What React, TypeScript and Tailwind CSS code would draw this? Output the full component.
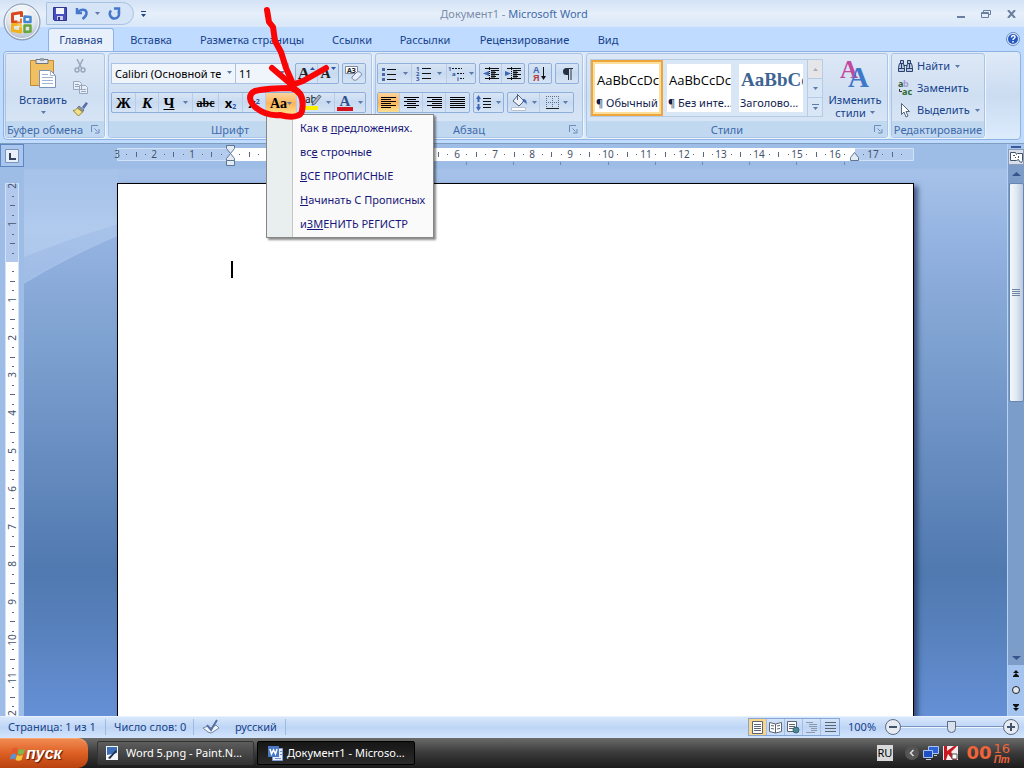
import React, { useState } from 'react';
import { clsx } from 'clsx';

const TABS = ['Главная', 'Вставка', 'Разметка страницы', 'Ссылки', 'Рассылки', 'Рецензирование', 'Вид'];
const TAB_WIDTHS = ['w-[66px]', 'w-[74px]', 'w-[128px]', 'w-[72px]', 'w-[74px]', 'w-[125px]', 'w-[42px]'];

const CASE_OPTIONS = [
  { before: 'Как в ', key: 'п', after: 'редложениях.' },
  { before: 'вс', key: 'е', after: ' строчные' },
  { before: '', key: 'В', after: 'СЕ ПРОПИСНЫЕ' },
  { before: '', key: 'Н', after: 'ачинать С Прописных' },
  { before: 'и', key: 'ЗМ', after: 'ЕНИТЬ РЕГИСТР' }
];

const UNIT = 37.8;

const Caret = ({ className }: { className?: string }) => (
  <svg width="5" height="3" viewBox="0 0 5 3" className={clsx('shrink-0', className)}>
    <path d="M0 0h5L2.5 3z" fill="#5a7bab" />
  </svg>
);

const Launcher = ({ label }: { label: string }) => (
  <button aria-label={label} className="absolute right-1 top-1">
    <svg width="9" height="9" viewBox="0 0 9 9" fill="none" stroke="#6b8cba">
      <path d="M.5 7V.5H7" />
      <path d="M3.5 3.5l3 3M8 4v4H4" />
    </svg>
  </button>
);

interface GroupProps {
  title: string;
  className: string;
  launcher?: boolean;
  children: React.ReactNode;
}

// Ribbon group: content on top, caption strip at the bottom
const Group = ({ title, className, launcher = true, children }: GroupProps) => (
  <section
    className={clsx(
      'flex shrink-0 flex-col rounded-[3px] border border-[#a9c4e6] bg-gradient-to-b from-[#dde8f6] via-[#cfdff2] to-[#dbe8f7] shadow-[1px_1px_0_#eef5fd]',
      className
    )}
  >
    <div className="flex-1">{children}</div>
    <div className="relative h-4 whitespace-nowrap rounded-b-[3px] bg-[#c1d8f1] text-center leading-[18px] text-[#3e6aaa]">
      <span className={launcher ? 'pr-5' : ''}>{title}</span>
      {launcher && <Launcher label={title} />}
    </div>
  </section>
);

const Cluster = ({ children, className }: { children: React.ReactNode; className?: string }) => (
  <div
    className={clsx(
      'flex h-[21px] divide-x divide-[#b7cce8] rounded-[2px] border border-[#8fb0da] bg-gradient-to-b from-[#d8e5f5] via-[#c8daf0] to-[#d6e4f5]',
      className
    )}
  >
    {children}
  </div>
);

interface ToolProps {
  label: string;
  width: string;
  active?: boolean;
  caret?: boolean;
  onClick?: () => void;
  children: React.ReactNode;
}

const Tool = ({ label, width, active, caret, onClick, children }: ToolProps) => (
  <button
    aria-label={label}
    onClick={onClick}
    className={clsx(
      'flex h-full shrink-0 items-center justify-center gap-1 text-black',
      width,
      active && 'bg-gradient-to-b from-[#fbd49b] via-[#fbb45a] to-[#fde08f]'
    )}
  >
    {children}
    {caret && <Caret />}
  </button>
);

const Lines = ({ rows }: { rows: [number, number][] }) => (
  <svg width="15" height="13" viewBox="0 0 15 13" stroke="#000">
    {rows.map(([x, w], i) => (
      <path key={i} d={`M${x} ${i * 2 + 1.5}h${w}`} />
    ))}
  </svg>
);

const OfficeLogo = () => (
  <svg width="38" height="38" viewBox="0 0 38 38">
    <defs>
      <radialGradient id="orb" cx="50%" cy="30%" r="70%">
        <stop offset="0" stopColor="#fff" />
        <stop offset=".6" stopColor="#dfe5ee" />
        <stop offset="1" stopColor="#a9b7ca" />
      </radialGradient>
    </defs>
    <circle cx="19" cy="19" r="18" fill="url(#orb)" stroke="#8595ae" />
    <circle cx="19" cy="19" r="16.5" fill="none" stroke="#f7fafe" />
    <g fill="none" strokeWidth="3" strokeLinejoin="round">
      <path d="M18.500 14V9.500l-9 1.500v8h5" stroke="#d9481c" />
      <path d="M21.500 13.500l6 .5v5h-6z" stroke="#4585cf" strokeWidth="2.500" />
      <path d="M14 21.500H9.500v6l8 1.500v-5" stroke="#f2b21c" />
      <path d="M21.500 22.500h6v6l-6 .5z" stroke="#69a63a" strokeWidth="2.500" />
      <path d="M18 15.500v4h-4.500" stroke="#e8762c" strokeWidth="2" />
      <path d="M14 22h4v3" stroke="#f4c64a" strokeWidth="2" />
    </g>
  </svg>
);

const FontSizeGlyph = ({ up }: { up?: boolean }) => (
  <span className="flex items-start">
    <span className={clsx("font-['Liberation_Serif',serif] font-bold leading-4 text-[#222]", up ? 'text-[17px]' : 'text-[14px]')}>A</span>
    <svg width="5" height="3" viewBox="0 0 5 3" className="mt-px">
      <path d={up ? 'M0 3h5L2.500 0z' : 'M0 0h5L2.500 3z'} fill="#2a55a5" />
    </svg>
  </span>
);

const HorizontalRuler = () => {
  const marks: React.ReactNode[] = [];
  for (let q = -12; q <= 71; q++) {
    const x = 113 + (q * UNIT) / 4;
    if (q === 0 || x > 794 || q === 66) continue;
    if (q % 4 === 0) {
      marks.push(
        <text key={q} x={Math.round(x)} y="10" textAnchor="middle" fontSize="10" fill="#44536d">
          {Math.abs(q / 4)}
        </text>
      );
    } else {
      const half = q % 2 === 0;
      marks.push(<path key={q} d={half ? `M${Math.round(x)}.5 4v5` : `M${Math.round(x)}.5 6v1`} stroke="#5a6680" />);
    }
  }
  return (
    <svg width="797" height="20" viewBox="0 0 797 20" className="shrink-0 overflow-visible">
      <path d="M.5.500h796v12H.5z" fill="#b4cdee" stroke="#cfe2f8" />
      <path d="M113 0h625v13H113z" fill="#fff" />
      {marks}
      {Array.from({ length: 13 }, (_, i) => (
        <path key={i} d={`M${Math.round(113 + (i + 1) * 47.2)}.5 14v3`} stroke="#7189ad" />
      ))}
      <g fill="#e3ebf5" stroke="#5f7594">
        <path d="M109.500-2.500h8v3l-4 5 4 5v2h-8v-2l4-5-4-5z" />
        <path d="M109.500 12.500h8v5h-8z" />
        <path d="M737.500 4.500l4 5v3h-8v-3z" />
      </g>
    </svg>
  );
};

const VerticalRuler = () => {
  const marks: React.ReactNode[] = [];
  for (let q = -8; q <= 48; q++) {
    if (q === 0) continue;
    const y = Math.round(79 + (q * UNIT) / 4);
    if (q % 4 === 0) {
      marks.push(
        <text key={q} transform={`translate(11 ${y}) rotate(-90)`} textAnchor="middle" fontSize="10" fill="#44536d">
          {Math.abs(q / 4)}
        </text>
      );
    } else {
      marks.push(<path key={q} d={q % 2 === 0 ? `M5 ${y}.5h5` : `M7 ${y}.5h2`} stroke="#5a6680" />);
    }
  }
  return (
    <svg width="14" height="533" viewBox="0 0 14 533" className="ml-[5px] shrink-0">
      <path d="M.5.5h13v532H.5z" fill="#b2c9ed" stroke="#cfe2f8" />
      <path d="M1 79h12v454H1z" fill="#fff" />
      {marks}
    </svg>
  );
};

const TitleBar = () => (
  <header className="flex h-[27px] shrink-0 items-center bg-gradient-to-b from-[#d3e2f6] via-[#e6effa] to-[#d9e7f9] pl-[46px]">
    <div className="flex h-[23px] w-[88px] items-center rounded-r-full border border-[#a8c2e2] bg-[#d5e4f7] pl-1.5">
      <button aria-label="Сохранить">
        <svg width="14" height="14" viewBox="0 0 14 14">
          <path d="M.5.5h13v13h-12l-1-1z" fill="#4a4fc0" stroke="#2f3590" />
          <path d="M3 1h8v6H3z" fill="#f2f5fc" />
          <path d="M4 9h6v4H4z" fill="#c9cfe8" />
          <path d="M5 10h2v3H5z" fill="#2f3590" />
        </svg>
      </button>
      <button aria-label="Отменить" className="ml-2 flex items-center gap-1.5">
        <svg width="14" height="13" viewBox="0 0 14 13" fill="none" stroke="#4577cb" strokeWidth="2.500">
          <path d="M2 1v5h5" />
          <path d="M2.500 5.500C5 2 11 1.500 11.500 5.500c.3 3-2 5-4 6.500" />
        </svg>
        <Caret />
      </button>
      <button aria-label="Вернуть" className="ml-2">
        <svg width="13" height="13" viewBox="0 0 13 13" fill="none" stroke="#4577cb" strokeWidth="2.500">
          <path d="M3 3.500C0 7 3 11.500 6.500 11.500S12 8 10.500 4.500" />
          <path d="M6 1.500h5v4.500" />
        </svg>
      </button>
    </div>
    <button aria-label="Настройка панели быстрого доступа" className="ml-1.5">
      <svg width="7" height="6" viewBox="0 0 7 6" fill="#1f4384">
        <path d="M1 0h5v1H1zM1 3h5L3.500 6z" />
      </svg>
    </button>
    <h1 className="flex-1 pr-[76px] text-center text-[#3e6aaa]">
      <span className="text-[#7b8dab]">Документ1 - </span>Microsoft Word
    </h1>
    <div className="flex items-center gap-4 pr-2">
      <button aria-label="Свернуть" className="mt-1.5 h-0.5 w-2 bg-[#6a7f9f]" />
      <button aria-label="Восстановить">
        <svg width="10" height="8" viewBox="0 0 10 8" fill="none" stroke="#6a7f9f">
          <path d="M2.500 2V.5h7v4H8M.5 2.500h7v5h-7zM.5 3.500h7" />
        </svg>
      </button>
      <button aria-label="Закрыть">
        <svg width="9" height="8" viewBox="0 0 9 8" stroke="#6a7f9f" strokeWidth="2">
          <path d="M1 0l7 8M8 0L1 8" />
        </svg>
      </button>
    </div>
  </header>
);

const ClipboardGroup = () => (
  <Group title="Буфер обмена" className="w-[100px]">
    <div className="flex pl-3 pt-[3px]">
      <button className="flex w-[50px] flex-col items-center text-[#15428b]">
        <svg width="28" height="32" viewBox="0 0 28 32">
          <path d="M1.500 3.500h23v25h-23z" fill="#f0bf62" stroke="#c08a30" />
          <path d="M7 2.500h12v4H7z" fill="#e4e7ee" stroke="#6d7480" />
          <path d="M11 1h4v3h-4z" fill="#9aa3b0" />
          <path d="M10.500 13.500h11l5 5v12h-16z" fill="#fff" stroke="#7b93b8" />
          <path d="M21.500 13.500v5h5M13 17.500h6M13 20.500h11M13 23.500h11M13 26.500h11" fill="none" stroke="#9db4d4" />
        </svg>
        <span className="mt-1 leading-[14px]">Вставить</span>
        <Caret className="mt-1" />
      </button>
      <div className="flex w-6 flex-col items-center gap-2 pt-0.5">
        <button aria-label="Вырезать">
          <svg width="12" height="14" viewBox="0 0 12 14" fill="none" stroke="#98a7bd" strokeWidth="1.500">
            <path d="M3 0l4.500 9M9 0L4.500 9" />
            <circle cx="3" cy="11" r="2" />
            <circle cx="9" cy="11" r="2" />
          </svg>
        </button>
        <button aria-label="Копировать">
          <svg width="15" height="13" viewBox="0 0 15 13" fill="#e8eef7" stroke="#98a7bd">
            <path d="M.5.500h6l2 2v6h-8zM6.500 4.500h6l2 2v6h-8z" />
            <path d="M2 3.500h4M2 5.500h4M8 8.500h5M8 10.500h5" />
          </svg>
        </button>
        <button aria-label="Формат по образцу">
          <svg width="15" height="14" viewBox="0 0 15 14">
            <path d="M9 5l4-5 2 1.500L11 7z" fill="#5a6fa5" />
            <path d="M6 4l5 4-1.500 2-5-4z" fill="#8f98a8" stroke="#6e7788" />
            <path d="M4.500 6l5 4-4 4L0 8.500c2 0 3.500-1 4.500-2.500z" fill="#f0e08a" stroke="#98842e" />
          </svg>
        </button>
      </div>
    </div>
  </Group>
);

interface FontGroupProps {
  menuOpen: boolean;
  onToggleMenu: () => void;
}

const CaseMenu = () => (
  <ul
    role="menu"
    className="absolute left-0 top-full z-20 flex w-[168px] flex-col border border-[#868686] bg-[linear-gradient(to_right,#e9eeee_25px,#c5c5c5_25px,#c5c5c5_26px,#fafafa_26px)] py-px shadow-[2px_2px_2px_rgba(0,0,0,0.45)]"
  >
    {CASE_OPTIONS.map(({ before, key, after }) => (
      <li key={after} role="none">
        <button role="menuitem" className="h-6 w-full whitespace-nowrap pl-[33px] text-left text-[#17177b]">
          {before}
          <u>{key}</u>
          {after}
        </button>
      </li>
    ))}
  </ul>
);

const FontGroup = ({ menuOpen, onToggleMenu }: FontGroupProps) => (
  <Group title="Шрифт" className="w-[264px]">
    <div className="flex pl-0.5 pt-[9px]">
      <label className="relative">
        <select aria-label="Шрифт" className="h-[21px] w-[125px] appearance-none border border-[#a9c3e4] bg-[#f0f5fb] pl-[3px] pr-3.5 text-black">
          <option>Calibri (Основной текст)</option>
        </select>
        <Caret className="pointer-events-none absolute right-1 top-2" />
      </label>
      <label className="relative -ml-px">
        <select aria-label="Размер шрифта" className="h-[21px] w-[54px] appearance-none border border-[#a9c3e4] bg-[#f0f5fb] pl-[3px] text-black">
          <option>11</option>
        </select>
        <Caret className="pointer-events-none absolute right-1 top-2" />
      </label>
      <Cluster className="ml-1.5">
        <Tool label="Увеличить размер" width="w-[22px]"><FontSizeGlyph up /></Tool>
        <Tool label="Уменьшить размер" width="w-[20px]"><FontSizeGlyph /></Tool>
      </Cluster>
      <Cluster className="ml-[3px]">
        <Tool label="Очистить формат" width="w-[22px]">
          <svg width="18" height="17" viewBox="0 0 18 17">
            <path d="M.5 1.500h12v7H.5z" fill="#fff" stroke="#7b8ba5" />
            <text x="2" y="8" fontSize="7" fontWeight="bold" fill="#222">АЗ</text>
            <path d="M7 12l5-5c2-1 5 1 4.500 3l-5 5c-2 1-5-1-4.500-3z" fill="#e9eef8" stroke="#6c7fa4" />
          </svg>
        </Tool>
      </Cluster>
    </div>
    <div className="flex pl-0.5 pt-2">
      <Cluster>
        <Tool label="Полужирный" width="w-[24px]">
          <b className="font-['Liberation_Serif',serif] text-[15px]">Ж</b>
        </Tool>
        <Tool label="Курсив" width="w-[23px]">
          <b className="font-['Liberation_Serif',serif] text-[15px] italic">К</b>
        </Tool>
        <Tool label="Подчеркнутый" width="w-[34px]" caret>
          <b className="mr-1 font-['Liberation_Serif',serif] text-[15px] underline">Ч</b>
        </Tool>
        <Tool label="Зачеркнутый" width="w-[26px]">
          <b className="font-['Liberation_Serif',serif] text-[12px] line-through">abc</b>
        </Tool>
        <Tool label="Подстрочный" width="w-[24px]">
          <b className="text-[13px]">x<sub className="text-[7px] text-[#2a55a5]">2</sub></b>
        </Tool>
        <Tool label="Надстрочный" width="w-[23px]">
          <b className="text-[13px]">x<sup className="text-[7px] text-[#2a55a5]">2</sup></b>
        </Tool>
        <div className="relative h-[21px]">
          <Tool label="Регистр" width="w-[30px]" active caret onClick={onToggleMenu}>
            <b className="-mr-1 font-['Liberation_Serif',serif] text-[14px]">Aa</b>
          </Tool>
          {menuOpen && <CaseMenu />}
        </div>
        <Tool label="Цвет выделения текста" width="w-[38px]" caret>
          <svg width="18" height="17" viewBox="0 0 18 17" className="ml-1 overflow-visible">
            <text x="1" y="9" fontSize="10" fill="#111">ab</text>
            <path d="M1 12h13v4H1z" fill="#f8f000" />
            <path d="M8 11l1-3 6-7 2 1.500L11 10z" fill="#aab4c6" stroke="#5c6679" />
          </svg>
        </Tool>
        <Tool label="Цвет текста" width="w-[30px]" caret>
          <svg width="17" height="17" viewBox="0 0 17 17" className="overflow-visible">
            <text x="8" y="12" textAnchor="middle" fontSize="15" fontWeight="bold" fontFamily="Liberation Serif" fill="#2f4f8f">A</text>
            <path d="M0 13h16v4H0z" fill="#d4111c" />
          </svg>
        </Tool>
      </Cluster>
    </div>
  </Group>
);

const ParagraphGroup = () => (
  <Group title="Абзац" className="w-[208px]">
    <div className="flex gap-[3px] pl-px pt-[9px]">
      <Cluster>
        <Tool label="Маркеры" width="w-[34px]" caret>
          <svg width="17" height="14" viewBox="0 0 17 14">
            <path d="M5 2.500h9M5 7.500h9M5 12.500h9" stroke="#111" />
            <path d="M0 1h3v3H0zM0 6h3v3H0zM0 11h3v3H0z" fill="#4a69a8" />
          </svg>
        </Tool>
        <Tool label="Нумерация" width="w-[35px]" caret>
          <svg width="17" height="16" viewBox="0 0 17 16" className="overflow-visible">
            <path d="M6 2.500h9M6 7.500h9M6 12.500h9" stroke="#111" />
            <g fontSize="6" fontWeight="bold" fill="#2f55a0">
              <text x="0" y="5">1</text>
              <text x="0" y="10">2</text>
              <text x="0" y="15">3</text>
            </g>
          </svg>
        </Tool>
        <Tool label="Многоуровневый список" width="w-[28px]" caret>
          <svg width="17" height="16" viewBox="0 0 17 16" className="overflow-visible">
            <path d="M4 2.500h10M9 7.500h7M12 12.500h4" stroke="#111" strokeDasharray="2 1" />
            <g fontSize="6" fontWeight="bold" fill="#2f55a0">
              <text x="0" y="5">1</text>
              <text x="4" y="10">a</text>
              <text x="9" y="15">i</text>
            </g>
          </svg>
        </Tool>
      </Cluster>
      <Cluster>
        {['Уменьшить отступ', 'Увеличить отступ'].map((label, i) => (
          <Tool key={label} label={label} width="w-[22px]">
            <svg width="16" height="14" viewBox="0 0 16 14">
              <path d="M2 1.500h14M8 3.500h8M8 5.500h5M8 7.500h8M8 9.500h5M2 11.500h14" stroke="#111" />
              <path d="M8 5.500h4M8 9.500h4" stroke="#111" strokeWidth="2" />
              <path d="M6.500 0v13" stroke="#111" strokeDasharray="1 1" />
              <path d={i === 0 ? 'M6 4v5L0 6.500z' : 'M0 4v5l6-2.500z'} fill="#3f68b5" />
            </svg>
          </Tool>
        ))}
      </Cluster>
      <Cluster>
        <Tool label="Сортировка" width="w-[22px]">
          <svg width="16" height="17" viewBox="0 0 16 17" className="overflow-visible">
            <g fontSize="9" fontWeight="bold" fontFamily="Liberation Sans">
              <text x="1" y="8" fill="#3c62ab">А</text>
              <text x="1" y="16" fill="#b03a42">Я</text>
            </g>
            <path d="M11 2h1v9h2l-2.500 4L9 11h2z" fill="#111" />
          </svg>
        </Tool>
      </Cluster>
      <Cluster>
        <Tool label="Отобразить все знаки" width="w-[22px]">
          <svg width="11" height="12" viewBox="0 0 11 12">
            <path d="M4.500 0H11v1H9.500v11h-1V1H7v11H6V7H4.500a3.500 3.500 0 010-7z" fill="#26303f" />
          </svg>
        </Tool>
      </Cluster>
    </div>
    <div className="flex gap-[3px] pl-px pt-2">
      <Cluster>
        <Tool label="По левому краю" width="w-[22px]" active>
          <Lines rows={[[0, 15], [0, 10], [0, 15], [0, 10], [0, 15], [0, 10]]} />
        </Tool>
        <Tool label="По центру" width="w-[23px]">
          <Lines rows={[[0, 15], [3, 9], [0, 15], [3, 9], [0, 15], [3, 9]]} />
        </Tool>
        <Tool label="По правому краю" width="w-[23px]">
          <Lines rows={[[0, 15], [5, 10], [0, 15], [5, 10], [0, 15], [5, 10]]} />
        </Tool>
        <Tool label="По ширине" width="w-[23px]">
          <Lines rows={[[0, 15], [0, 15], [0, 15], [0, 15], [0, 15], [0, 15]]} />
        </Tool>
      </Cluster>
      <Cluster>
        <Tool label="Междустрочный интервал" width="w-[29px]" caret>
          <svg width="16" height="16" viewBox="0 0 16 16">
            <path d="M2.500 0L5 4H3.500v3h-2V4H0zM2.500 16L5 12H3.500V9h-2v3H0z" fill="#3f68b5" />
            <path d="M7 3.500h8M7 6.500h8M7 9.500h8M7 12.500h8" stroke="#111" />
          </svg>
        </Tool>
      </Cluster>
      <Cluster>
        <Tool label="Заливка" width="w-[32px]" caret>
          <svg width="17" height="17" viewBox="0 0 17 17">
            <path d="M7 1l6 6-5 5-6-5z" fill="#eef2f8" stroke="#53627c" />
            <path d="M6.500 0v6" stroke="#53627c" />
            <path d="M12 5c3 0 4 2 3.500 6-1-3-2-3-4-3z" fill="#3f68b5" />
            <path d="M.5 13.500h14v3H.5z" fill="#fff" stroke="#b6c2d4" />
          </svg>
        </Tool>
        <Tool label="Границы" width="w-[33px]" caret>
          <svg width="13" height="13" viewBox="0 0 13 13" fill="none" stroke="#5d6f8d">
            <path d="M0 .5h12M0 6.500h12M.5 0v12M6.500 0v12M12.500 0v12" strokeDasharray="1 1" />
            <path d="M0 12.500h13" stroke="#222" />
          </svg>
        </Tool>
      </Cluster>
    </div>
  </Group>
);

const STYLE_ITEMS = [
  { name: '¶ Обычный', sample: 'AaBbCcDc', heading: false },
  { name: '¶ Без инте...', sample: 'AaBbCcDc', heading: false },
  { name: 'Заголово...', sample: 'AaBbCc', heading: true }
];

const StylesGroup = () => {
  const [selected, setSelected] = useState(0);
  return (
    <Group title="Стили" className="w-[302px]">
      <div className="flex pl-[3px] pt-[5px]">
        <div className="flex h-[58px] border border-[#b6cbe6] bg-[#d9e6f5]">
          {STYLE_ITEMS.map((item, i) => (
            <button
              key={item.name}
              onClick={() => setSelected(i)}
              className={clsx('h-14 w-[72px] border-2 p-0.5', selected === i ? 'border-[#eda63c] bg-[#fcdf9c]' : 'border-transparent')}
            >
              <span className="flex h-full flex-col justify-between overflow-hidden whitespace-nowrap bg-white pb-px pl-px pt-1.5 text-left">
                <span
                  className={clsx(
                    'block pl-px',
                    item.heading
                      ? "font-['Liberation_Serif',serif] text-[19px] font-bold leading-5 text-[#3d6493]"
                      : "font-['Open_Sans',sans-serif] text-[13px] leading-5 text-black"
                  )}
                >
                  {item.sample}
                </span>
                <span className="block leading-4 text-[#111c4e]">{item.name}</span>
              </span>
            </button>
          ))}
          <div className="flex w-[15px] flex-col divide-y divide-[#b6cbe6] border-l border-[#b6cbe6]">
            <button aria-label="Вверх" className="flex flex-1 items-center justify-center bg-[#e6e6e8]">
              <svg width="5" height="3" viewBox="0 0 5 3"><path d="M0 3h5L2.500 0z" fill="#adadb5" /></svg>
            </button>
            <button aria-label="Вниз" className="flex flex-1 items-center justify-center"><Caret /></button>
            <button aria-label="Дополнительно" className="flex flex-1 items-center justify-center">
              <svg width="7" height="6" viewBox="0 0 7 6" fill="#5a7bab"><path d="M0 0h7v1H0zM1 3h5L3.500 6z" /></svg>
            </button>
          </div>
        </div>
        <button className="flex flex-1 flex-col items-center text-[#15428b]">
          <svg width="30" height="30" viewBox="0 0 30 30" className="overflow-visible font-['Liberation_Serif',serif] font-bold">
            <text x="0" y="19" fontSize="25" fill="#c2479f">A</text>
            <text x="8" y="28" fontSize="29" fill="#3f78c8">A</text>
          </svg>
          <span className="mt-1 leading-[13px]">Изменить</span>
          <span className="flex items-center gap-1 leading-[13px]">стили <Caret /></span>
        </button>
      </div>
    </Group>
  );
};

const EditingGroup = () => (
  <Group title="Редактирование" className="w-[94px]" launcher={false}>
    <div className="flex flex-col pl-1.5 pt-px text-[#15428b]">
      <button className="flex h-[22px] items-center gap-1">
        <svg width="15" height="14" viewBox="0 0 15 14" fill="#b9c8e0" stroke="#28406e">
          <path d="M2.500 1.500h3v3h-3zM9.500 1.500h3v3h-3zM1.500 4.500h4l1 4v4h-6v-4zM9.500 4.500h4l1 4v4h-6v-4zM6 6.500h3M.5 9.500h6M8.500 9.500h6M3.500 5v4M11.500 5v4" />
        </svg>
        Найти <Caret className="ml-px" />
      </button>
      <button className="flex h-[22px] items-center gap-1">
        <svg width="15" height="16" viewBox="0 0 15 16" fontSize="9" fontWeight="bold" fontFamily="Noto Sans" className="overflow-visible">
          <text x="0" y="7" fill="#2a5d3a">a</text>
          <text x="5" y="7" fill="#a99fd0">b</text>
          <text x="4" y="15" fill="#2b6b2f">ac</text>
          <path d="M1.500 9v2.500H4" fill="none" stroke="#333" />
        </svg>
        Заменить
      </button>
      <button className="flex h-[22px] items-center gap-1">
        <svg width="15" height="15" viewBox="0 0 15 15">
          <path d="M3.500.500v11l2.500-2.500 2 5 2-1-2-4.500h3.500z" fill="#fff" stroke="#55647d" />
        </svg>
        Выделить <Caret className="ml-px" />
      </button>
    </div>
  </Group>
);

const VerticalScroll = () => (
  <aside className="flex w-[17px] shrink-0 flex-col items-center border-l border-[#b8d4f5] bg-[#a4c3ee]">
    <div className="mt-0.5 h-0.5 w-2.5 bg-[#3b5c9a]" />
    <button aria-label="Линейка" className="mt-px flex h-4 w-full items-center justify-center border border-[#8a9db9] bg-[#d8dfea]">
      <svg width="13" height="12" viewBox="0 0 13 12" fill="#fff" stroke="#44536d">
        <path d="M.5 1.500h5l1 2 1-1h5v7l-1 2-2-1-1-2-2 1h-6z" />
        <path d="M3 4.500h2M5.500 6v1M8.500 5v2" />
      </svg>
    </button>
    <button aria-label="Прокрутить вверх" className="flex h-[18px] w-full items-center justify-center bg-[#7d9cc8]">
      <svg width="9" height="4" viewBox="0 0 9 4"><path d="M0 4h9L4.500 0z" fill="#35558d" /></svg>
    </button>
    <div className="w-full flex-1 bg-[#7b9dc9]">
      <div className="mx-auto flex h-[219px] w-[15px] flex-col items-center justify-center gap-px rounded-[2px] border border-[#6a86ae] bg-gradient-to-r from-[#f4f8fc] via-[#dfe8f2] to-[#b9c9e2]">
        {[0, 1, 2, 3].map(i => (
          <span key={i} className="h-px w-2 bg-[#71839f]" />
        ))}
      </div>
    </div>
    <button aria-label="Прокрутить вниз" className="flex h-[15px] w-full items-center justify-center bg-[#7d9cc8]">
      <svg width="9" height="4" viewBox="0 0 9 4"><path d="M0 0h9L4.500 4z" fill="#35558d" /></svg>
    </button>
    <div className="flex h-[51px] flex-col items-center justify-around">
      <button aria-label="Предыдущая страница">
        <svg width="6" height="7" viewBox="0 0 6 7"><path d="M3 0l3 3H0zM3 3l3 3H0zM0 6h6v1H0z" fill="#111" /></svg>
      </button>
      <button aria-label="Выбор объекта перехода" className="size-2 rounded-full border border-[#222] bg-[#dfe6ee]" />
      <button aria-label="Следующая страница">
        <svg width="6" height="7" viewBox="0 0 6 7"><path d="M0 0h6v1H0zM0 1h6L3 4zM0 4h6L3 7z" fill="#111" /></svg>
      </button>
    </div>
  </aside>
);

const Workspace = () => (
  <main className="flex min-h-0 flex-1 overflow-hidden border-t border-[#7f9dbd] bg-[#9dbce6]">
    <div className="flex w-6 shrink-0 flex-col">
      <button aria-label="Табуляция" className="mb-4 flex h-6 w-6 items-center justify-center border border-[#5f85c0] bg-[#a9c6ee]">
        <svg width="14" height="14" viewBox="0 0 14 14">
          <path d="M.5.500h13v13H.500z" fill="#e9f0fa" stroke="#7a95bd" />
          <path d="M5 4v6h6" fill="none" stroke="#33415c" strokeWidth="2" />
        </svg>
      </button>
      <VerticalRuler />
    </div>
    <div className="relative flex min-w-0 flex-1 flex-col items-center bg-[linear-gradient(to_bottom,#9dbce6_0px,#9dbce6_24px,#a6c2e9_26px,#91b0df_110px,#7da1d0_200px,#6a8fc2_300px,#5079b0_428px,#5882bd_490px,#6590d6_573px)]">
      <svg width="94" height="120" viewBox="0 0 94 120" className="absolute left-0 top-6">
        <defs>
          <linearGradient id="glow" x1="0" y1="0" x2="0" y2="60" gradientUnits="userSpaceOnUse">
            <stop offset="0" stopColor="#bfd6f4" stopOpacity="0" />
            <stop offset="1" stopColor="#bfd6f4" stopOpacity=".4" />
          </linearGradient>
        </defs>
        <path d="M0 89Q45 71 94 56V0H0z" fill="url(#glow)" />
        <path d="M0 115Q45 88 94 67V0H0z" fill="url(#glow)" />
        <path d="M0 115Q45 88 94 67" fill="none" stroke="#b0caef" opacity=".7" />
      </svg>
      <div className="mt-1 flex h-[35px] w-full justify-center">
        <HorizontalRuler />
      </div>
      <article className="relative w-full max-w-[797px] flex-1 border border-b-0 border-black bg-white pl-[113px] pt-[77px] shadow-[4px_3px_5px_rgba(30,50,90,0.7)]">
        <div className="h-[17px] w-0.5 bg-black" />
      </article>
    </div>
    <VerticalScroll />
  </main>
);

const VIEWS = ['Разметка страницы', 'Режим чтения', 'Веб-документ', 'Структура', 'Черновик'];

const ViewIcon = ({ index }: { index: number }) => (
  <svg width="13" height="13" viewBox="0 0 13 13" fill="#fff" stroke="#5c6470">
    {index === 0 && <path d="M1.500.500h10v12h-10zM3 3.500h7M3 5.500h7M3 7.500h7M3 9.500h7" />}
    {index === 1 && <path d="M.5 1.500l6 1.500 6-1.500v9l-6 1.500-6-1.500zM6.500 3v9M2 4.500l3 .5M2 7.500l3 .5M8 5l3-.5M8 8l3-.5" />}
    {index === 2 && (
      <>
        <path d="M.5.500h9v10h-9zM2 3.500h6M2 5.500h6M2 7.500h4" />
        <circle cx="9" cy="9" r="3" fill="#4a8a8f" stroke="#35657c" />
      </>
    )}
    {index === 3 && <path d="M1 1.500h7M4 3.500h8M4 5.500h8M6 7.500h6M6 9.500h6M1 11.500h9" stroke="#8d99ab" />}
    {index === 4 && <path d="M1 1.500h11M1 4.500h11M1 7.500h11M1 10.500h11" />}
  </svg>
);

const ZoomButton = ({ plus }: { plus?: boolean }) => (
  <button aria-label={plus ? 'Увеличить масштаб' : 'Уменьшить масштаб'}>
    <svg width="16" height="16" viewBox="0 0 16 16">
      <circle cx="8" cy="8" r="7.500" fill="#e6eaf1" stroke="#5c6b85" />
      <path d={plus ? 'M4 8h8M8 4v8' : 'M4 8h8'} stroke="#44536d" strokeWidth="2" />
    </svg>
  </button>
);

const StatusBar = () => {
  const [zoom, setZoom] = useState(49);
  return (
    <footer className="flex h-[22px] shrink-0 items-center border-t border-[#e8f2fe] bg-gradient-to-b from-[#d8e7fb] via-[#bed5f5] to-[#d3e5fd] pb-px text-[#15428b]">
      <span className="w-[106px] border-r border-[#9ebce3] pl-2">Страница: 1 из 1</span>
      <span className="w-[88px] border-r border-[#9ebce3] pl-2">Число слов: 0</span>
      <button aria-label="Проверка правописания" className="pl-2">
        <svg width="18" height="16" viewBox="0 0 18 16">
          <path d="M1 9l5-2 3 2 5-3 3 3-6 4-2 1-3-1z" fill="#f2f5fa" stroke="#7485a3" />
          <path d="M5 6l4 5 6-10" fill="none" stroke="#5670a5" strokeWidth="2" />
        </svg>
      </button>
      <span className="ml-[15px] w-[51px] border-r border-[#9ebce3]">русский</span>
      <div className="ml-auto flex h-[18px] border border-[#86a7d6]">
        {VIEWS.map((view, i) => (
          <button
            key={view}
            aria-label={view}
            className={clsx('flex w-[18px] items-center justify-center border-r border-[#a5bfe4] last:border-r-0', i === 0 && 'bg-[#fbd68a]')}
          >
            <ViewIcon index={i} />
          </button>
        ))}
      </div>
      <span className="w-[45px] pl-2">100%</span>
      <ZoomButton />
      <input
        type="range"
        aria-label="Масштаб"
        value={zoom}
        onChange={e => setZoom(Number(e.target.value))}
        className="h-4 w-[102px] appearance-none bg-[linear-gradient(to_bottom,transparent_7px,#7795c2_7px,#7795c2_8px,#eef5ff_8px,#eef5ff_9px,transparent_9px)] [&::-webkit-slider-thumb]:h-3 [&::-webkit-slider-thumb]:w-[9px] [&::-webkit-slider-thumb]:appearance-none [&::-webkit-slider-thumb]:rounded-b-full [&::-webkit-slider-thumb]:border [&::-webkit-slider-thumb]:border-[#5c6b85] [&::-webkit-slider-thumb]:bg-[#d9e1ee]"
      />
      <span className="flex pr-[5px]"><ZoomButton plus /></span>
    </footer>
  );
};

const Taskbar = () => (
  <nav className="flex h-[30px] shrink-0 items-stretch bg-gradient-to-b from-[#6b6b6b] via-[#3a3a3a] to-[#1c1c1c] text-white">
    <button className="flex w-[88px] items-center rounded-r-[10px] border-t border-[#f7a878] bg-gradient-to-b from-[#f08a50] via-[#dd5f22] to-[#b9420f] pl-2.5">
      <svg width="16" height="16" viewBox="0 0 16 16">
        <path d="M2.500 3C4 1.500 6 1.500 8 2.500L6.500 7.500C5 6.500 3 6.500 1 8z" fill="#e4572e" />
        <path d="M9 3c2 1 4 1 6 0l-1.500 5c-2 1-4 1-6 0z" fill="#7db84a" />
        <path d="M1 9c2-1.500 4-1.500 5.500-.5L5 13.500C3.500 12.500 1.500 12.500 0 14z" fill="#5b93d9" />
        <path d="M7 9c2 1 4 1 6 0l-1.500 5c-2 1-4 1-6 0z" fill="#f3c63a" />
      </svg>
      <span className="font-['Liberation_Sans',sans-serif] text-[16px] font-bold italic [text-shadow:1px_1px_1px_#4a1a05]">пуск</span>
    </button>
    <button className="my-[3px] ml-[9px] flex w-[157px] items-center gap-2 rounded-[2px] border border-[#333] bg-gradient-to-b from-[#5d5d5d] to-[#333] pl-2">
      <svg width="12" height="14" viewBox="0 0 12 14">
        <path d="M0 0h12v14H0z" fill="#f4f6fa" />
        <path d="M1 1h10v6L1 9z" fill="#3c6fb5" />
        <path d="M2 12l8-8 1 1-7 8z" fill="#1d2e4c" />
      </svg>
      Word 5.png - Paint.N...
    </button>
    <button className="my-[3px] ml-[3px] flex w-[158px] items-center gap-1 rounded-[2px] border border-black bg-gradient-to-b from-[#161616] to-[#2b2b2b] pl-2.5">
      <svg width="15" height="15" viewBox="0 0 15 15">
        <path d="M4.500 2.500h10v12h-10z" fill="#e9f0fb" stroke="#7d9fd6" />
        <path d="M0 0h11v11H0z" fill="#4b78c4" />
        <path d="M2 3l1.500 5 2-4 2 4L9 3" fill="none" stroke="#fff" strokeWidth="1.500" />
        <path d="M12 5.500h2M12 8.500h2M7 12.500h6" stroke="#6b8fcb" />
      </svg>
      Документ1 - Microso...
    </button>
    <div className="ml-auto flex items-center pr-3.5">
      <span className="bg-[#d9d9d9] px-px leading-4 text-black">RU</span>
      <div className="ml-3 flex items-center gap-1">
        <button aria-label="Показать скрытые значки">
          <svg width="14" height="14" viewBox="0 0 14 14">
            <circle cx="7" cy="7" r="7" fill="#555" />
            <path d="M8.500 4L5.500 7l3 3" fill="none" stroke="#ddd" strokeWidth="1.500" />
          </svg>
        </button>
        <svg width="16" height="14" viewBox="0 0 16 14">
          <path d="M5.500.500h10v7h-10z" fill="#2f62d8" stroke="#a8c4f0" />
          <path d="M.5 4.500h9v7h-9z" fill="#1f4fc4" stroke="#a8c4f0" />
          <path d="M3 13.500h5M11 9.500h3" stroke="#c3cede" />
        </svg>
        <svg width="15" height="14" viewBox="0 0 15 14">
          <path d="M0 0h15v14H0z" fill="#f3ecec" />
          <path d="M1 0h3v5L11 0h3L8 6l6 8h-4L5 8l-2 6H1z" fill="#c8171f" />
          <path d="M9 8h5v5H9z" fill="#fff" stroke="#555" />
        </svg>
      </div>
      <time className="ml-2 flex items-center gap-0.5 text-[#f0643a]">
        <span className="font-['DejaVu_Sans',sans-serif] text-[18px] font-bold">00</span>
        <span className="flex flex-col items-center">
          <span className="font-['DejaVu_Sans',sans-serif] text-[13px] leading-3">16</span>
          <span className="font-['Liberation_Sans',sans-serif] text-[10px] font-bold italic leading-[9px]">Пт</span>
        </span>
      </time>
    </div>
  </nav>
);

// Hand-drawn arrow and ring pointing at the "change case" button
const RedMarker = () => (
  <svg
    width="100"
    height="124"
    viewBox="240 0 100 124"
    className="pointer-events-none absolute left-[240px] top-0 z-30"
    fill="none"
    stroke="#fa0505"
    strokeWidth="6"
    strokeLinecap="round"
    strokeLinejoin="round"
  >
    <path d="M267 10l2 12 4 5 2 14 6 11 5 16 7 16" />
    <path d="M272 68l7 6 13 11 11-4 9-5 14-8" />
    <path d="M294 88C282 88 266 88 255 91C247 95 250 102 255 107C262 113 269 116 280 115C291 118 301 117 302 111C304 100 302 91 291 88" />
  </svg>
);

export default function App() {
  const [tab, setTab] = useState(0);
  const [menuOpen, setMenuOpen] = useState(true);

  return (
    <div className="relative flex h-screen flex-col overflow-hidden bg-[#bfdbff] font-['Noto_Sans','Liberation_Sans',sans-serif] text-[11px] leading-4">
      <TitleBar />
      <button aria-label="Кнопка Office" className="absolute left-[3px] top-[3px] z-10">
        <OfficeLogo />
      </button>
      <div className="flex h-6 shrink-0 items-end pl-12">
        <div role="tablist" className="flex h-[23px] flex-1">
          {TABS.map((name, i) => (
            <button
              key={name}
              role="tab"
              aria-selected={tab === i}
              onClick={() => setTab(i)}
              className={clsx(
                'shrink-0 rounded-t-[3px] border border-b-0 text-center text-[#15428b]',
                TAB_WIDTHS[i],
                tab === i ? 'border-[#8db2e3] bg-[#e8f0fb]' : 'border-transparent'
              )}
            >
              {name}
            </button>
          ))}
        </div>
        <button aria-label="Справка" className="mr-1 self-center">
          <svg width="14" height="14" viewBox="0 0 14 14">
            <circle cx="7" cy="7" r="6.500" fill="#dce8fa" stroke="#6b8cc4" />
            <circle cx="7" cy="7" r="5" fill="#2558c0" />
            <path d="M5.500 5.500c0-2.500 3.500-2.500 3.500-.5 0 1.500-2 1.500-2 3M7 9v1.500" fill="none" stroke="#fff" strokeWidth="1.500" />
          </svg>
        </button>
      </div>
      <div className="mx-[3px] mb-[3px] flex h-[89px] shrink-0 gap-[3px] rounded-[4px] border border-[#8db2e3] bg-gradient-to-b from-[#dfeaf8] via-[#cbdcf1] to-[#dcecfd] p-px">
        <ClipboardGroup />
        <FontGroup menuOpen={menuOpen} onToggleMenu={() => setMenuOpen(!menuOpen)} />
        <ParagraphGroup />
        <StylesGroup />
        <EditingGroup />
      </div>
      <Workspace />
      <StatusBar />
      <Taskbar />
      <RedMarker />
    </div>
  );
}
